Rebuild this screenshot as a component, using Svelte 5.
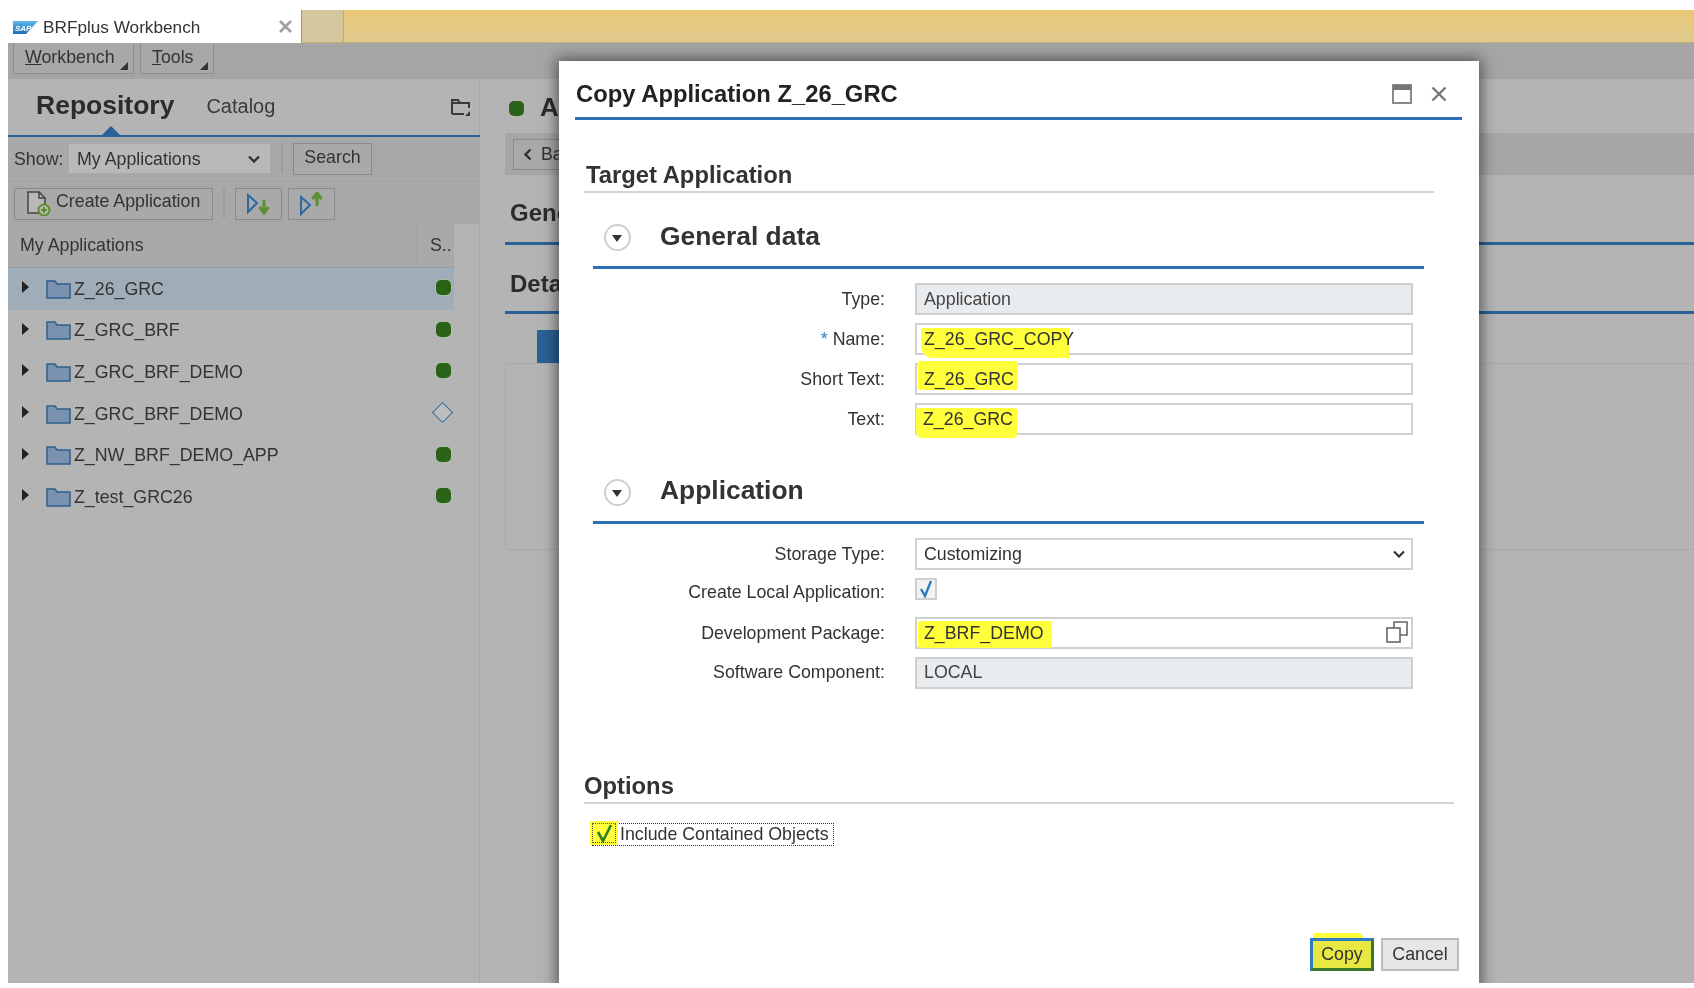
<script>
	const apps = [
		{ name: 'Z_26_GRC', selected: true, status: 'ok' },
		{ name: 'Z_GRC_BRF', status: 'ok' },
		{ name: 'Z_GRC_BRF_DEMO', status: 'ok' },
		{ name: 'Z_GRC_BRF_DEMO', status: 'new' },
		{ name: 'Z_NW_BRF_DEMO_APP', status: 'ok' },
		{ name: 'Z_test_GRC26', status: 'ok' }
	];
</script>

<div class="page">
	<div class="tabstrip">
		<div class="tab">
			<svg class="sap" width="25" height="13" viewBox="0 0 25 13">
				<defs>
					<linearGradient id="sapblue" x1="0" y1="0" x2="0" y2="1">
						<stop offset="0" stop-color="#5cb8ea" />
						<stop offset="1" stop-color="#1c6fb8" />
					</linearGradient>
				</defs>
				<polygon points="0,0 25,0 13,13 0,13" fill="url(#sapblue)" />
				<text x="2" y="9.5" class="saptext">SAP</text>
			</svg>
			<span class="tabtitle">BRFplus Workbench</span>
			<svg class="tabclose" width="13" height="13" viewBox="0 0 13 13" fill="none" stroke="#a0a0a0" stroke-width="2.600"><path d="M1 1l11 11M12 1L1 12" /></svg>
		</div>
		<div class="newtab"></div>
		<div class="tabfill"></div>
	</div>

	<div class="app">
		<div class="menubar">
			<div class="menubtn"><span><u>W</u>orkbench</span><i class="corner"></i></div>
			<div class="menubtn tools"><span><u>T</u>ools</span><i class="corner"></i></div>
		</div>

		<div class="workspace">
			<aside class="left">
				<div class="repohead">
					<div class="repotab">Repository<i class="pointer"></i></div>
					<div class="catalog">Catalog</div>
					<svg class="repoicon" width="21" height="19" viewBox="0 0 21 19" fill="none" stroke="#3a3a3a" stroke-width="2">
						<path d="M2 16V2h6l2 3h9v5M2 16h12" />
						<path d="M2 5h8" />
						<polygon points="20,13 20,18 15,18" fill="#3a3a3a" stroke="none" />
					</svg>
				</div>
				<div class="showbar">
					<span class="showlabel">Show:</span>
					<div class="select">
						My Applications
						<svg width="14" height="9" viewBox="0 0 14 9" fill="none" stroke="#333" stroke-width="2.4"><path d="M2 1.5l5 5 5-5" /></svg>
					</div>
					<i class="sep"></i>
					<div class="btn search">Search</div>
				</div>
				<div class="createbar">
					<div class="btn create">
						<svg width="26" height="26" viewBox="0 0 26 26" fill="none">
							<path d="M3 2h11l6 6v15H3z" stroke="#444" stroke-width="1.5" fill="#b8b8b8" />
							<path d="M14 2v6h6" stroke="#444" stroke-width="1.5" />
							<circle cx="19" cy="20" r="5.5" fill="#b8b8b8" stroke="#5c8f2e" stroke-width="2" />
							<path d="M19 17v6M16 20h6" stroke="#5c8f2e" stroke-width="2" />
						</svg>
						Create Application
					</div>
					<i class="sep"></i>
					<div class="btn iconbtn">
						<svg width="26" height="24" viewBox="0 0 26 24" fill="none">
							<path d="M2 3l9 8-9 9z" stroke="#2a6aa0" stroke-width="2" />
							<path d="M18 8v12M13.500 15l4.500 6 4.500-6" stroke="#5c8f2e" stroke-width="3" />
						</svg>
					</div>
					<div class="btn iconbtn">
						<svg width="26" height="24" viewBox="0 0 26 24" fill="none">
							<path d="M2 5l9 8-9 9z" stroke="#2a6aa0" stroke-width="2" />
							<path d="M18 14V2M13.500 7l4.500-6 4.500 6" stroke="#5c8f2e" stroke-width="3" />
						</svg>
					</div>
				</div>
				<div class="tablehead">
					<div class="colname">My Applications</div>
					<div class="colstatus">S..</div>
				</div>
				{#each apps as app}
					<div class="row" class:selected={app.selected}>
						<i class="arrow"></i>
						<svg width="25" height="19" viewBox="0 0 25 19">
							<path d="M1 18V1h8l2 3h13v14z" fill="#7a92b0" stroke="#2c5f8c" stroke-width="1.5" />
						</svg>
						<span class="appname">{app.name}</span>
						{#if app.status === 'ok'}
							<i class="dot"></i>
						{:else}
							<i class="diamond"></i>
						{/if}
					</div>
				{/each}
			</aside>

			<main class="right">
				<div class="righthead"><i class="dot big"></i><b>A</b></div>
				<div class="strip"><div class="btn back"><svg width="10" height="13" viewBox="0 0 10 13" fill="none" stroke="#333" stroke-width="2.4"><path d="M7.500 1.500l-5 5 5 5" /></svg>Ba</div></div>
				<div class="blockhead gen">Gene</div>
				<div class="blockhead">Deta</div>
				<div class="bluebar"></div>
				<div class="box"></div>
			</main>
		</div>

		<!-- dialog over the dimmed workbench -->
		<div class="modal">
			<header class="modalhead">
				<h1>Copy Application Z_26_GRC</h1>
				<svg width="20" height="20" viewBox="0 0 20 20" fill="none"><rect x="1" y="1" width="18" height="18" stroke="#8a8a8a" stroke-width="2" /><rect x="1" y="1" width="18" height="5" fill="#777" /></svg>
				<svg class="x" width="16" height="16" viewBox="0 0 16 16" fill="none" stroke="#777" stroke-width="2.400"><path d="M1.500 1.500l13 13M14.500 1.500l-13 13" /></svg>
			</header>

			<h2 class="grouptitle target">Target Application</h2>

			<div class="panelhead">
				<span class="collapse"><i></i></span>
				<h3>General data</h3>
			</div>
			<div class="form">
				<label>Type:</label>
				<div class="input readonly">Application</div>
				<label><em>*</em> Name:</label>
				<div class="input"><mark class="m-name">Z_26_GRC_COPY</mark></div>
				<label>Short Text:</label>
				<div class="input"><mark class="m-short">Z_26_GRC</mark></div>
				<label>Text:</label>
				<div class="input"><mark class="m-text">Z_26_GRC</mark></div>
			</div>

			<div class="panelhead second">
				<span class="collapse"><i></i></span>
				<h3>Application</h3>
			</div>
			<div class="form tight">
				<label>Storage Type:</label>
				<div class="input spaced">
					Customizing
					<svg width="12" height="8" viewBox="0 0 12 8" fill="none" stroke="#333" stroke-width="2.200"><path d="M1 1.500l5 5 5-5" /></svg>
				</div>
				<label class="checklabel">Create Local Application:</label>
				<div class="checkcell">
					<span class="checkbox">
						<svg width="16" height="18" viewBox="0 0 16 18" fill="none" stroke="#2a7cc0" stroke-width="2.400"><path d="M3 9l4 7 6-15" /></svg>
					</span>
				</div>
				<label>Development Package:</label>
				<div class="input spaced vhcell">
					<mark class="m-dev">Z_BRF_DEMO</mark>
					<svg class="vh" width="22" height="22" viewBox="0 0 22 22" fill="none" stroke="#666" stroke-width="1.600"><rect x="1" y="7" width="13" height="14" /><path d="M8 7V1h13v13h-7" /></svg>
				</div>
				<label>Software Component:</label>
				<div class="input readonly">LOCAL</div>
			</div>

			<h2 class="grouptitle options">Options</h2>
			<div class="include">
				<span class="includecheck">
					<svg width="20" height="20" viewBox="0 0 20 20" fill="none" stroke="#2e7d1e" stroke-width="2.600"><path d="M4 9l5 9 8-16" /></svg>
				</span>
				<span class="includetext">Include Contained Objects</span>
			</div>

			<footer class="modalfoot">
				<div class="footbtn copy">Copy</div>
				<div class="footbtn">Cancel</div>
			</footer>
		</div>
	</div>
</div>

<style>
	:global(body) {
		margin: 0;
		background: #fff;
	}
	.page {
		height: 988px;
		width: 1694px;
		padding-top: 10px;
		box-sizing: border-box;
		overflow: hidden;
		font-family: 'Liberation Sans', Arial, sans-serif;
		font-size: 17.800px;
		color: #333;
		filter: blur(0.4px);
	}
	i {
		display: block;
		font-style: normal;
	}

	.tabstrip {
		display: flex;
		height: 33px;
		border-bottom: 1px solid #c9ae6e;
		box-sizing: border-box;
	}
	.tab {
		width: 301px;
		background: #fff;
		display: flex;
		align-items: center;
		box-sizing: border-box;
		padding: 2px 9px 0 13px;
		margin-bottom: -1px;
		font-size: 17.200px;
	}
	.tabtitle {
		margin-left: 5px;
		flex: 1;
		color: #333;
	}
	.saptext {
		font: italic bold 8px 'Liberation Sans', sans-serif;
		fill: #fff;
	}
	.tabclose {
		margin-top: -2px;
	}
	.newtab {
		width: 43px;
		background: #d6c69e;
		border-left: 1px solid #a8946a;
		border-right: 1px solid #c5a868;
		box-sizing: border-box;
	}
	.tabfill {
		flex: 1;
		background: linear-gradient(#e9c776, #dfca8f);
	}

	.app {
		position: relative;
		margin-left: 8px;
		height: 940px;
		background: #b4b4b4;
		overflow: hidden;
	}
	.menubar {
		height: 36px;
		background: #a5a5a5;
		display: flex;
		gap: 6px;
		padding-left: 5px;
	}
	.menubtn {
		position: relative;
		width: 121px;
		height: 31px;
		border: 1px solid #8e8e8e;
		border-top: none;
		box-sizing: border-box;
		padding: 4px 0 0 11px;
		background: #a8a8a8;
	}
	.menubtn.tools {
		width: 74px;
	}
	.corner {
		position: absolute;
		right: 5px;
		bottom: 3px;
		width: 0;
		height: 0;
		border-left: 8px solid transparent;
		border-bottom: 8px solid #333;
	}

	.workspace {
		display: flex;
		height: 904px;
	}
	.left {
		width: 472px;
		flex: none;
		border-right: 1px solid #a8a8a8;
		box-sizing: border-box;
	}
	.repohead {
		position: relative;
		height: 58px;
		display: flex;
		align-items: center;
		border-bottom: 2px solid #2a6297;
		box-sizing: border-box;
		padding: 0 9px 4px 28px;
		margin-right: -1px;
	}
	.repotab {
		font-size: 26.500px;
		font-weight: bold;
		color: #2c2c2c;
	}
	.pointer {
		position: absolute;
		left: 94px;
		bottom: 0;
		width: 0;
		height: 0;
		border-left: 9px solid transparent;
		border-right: 9px solid transparent;
		border-bottom: 9px solid #2a6297;
	}
	.catalog {
		font-size: 20px;
		margin: 2px 0 0 32px;
		flex: 1;
		color: #3a3a3a;
	}
	.repoicon {
		margin-top: 4px;
	}
	.showbar,
	.createbar {
		display: flex;
		align-items: center;
		background: #a8a8a8;
	}
	.showbar {
		height: 42px;
		padding: 2px 0 0 6px;
		border-bottom: 1px solid #b0b0b0;
		box-sizing: border-box;
	}
	.createbar {
		height: 45px;
		padding: 4px 0 0 6px;
		box-sizing: border-box;
	}
	.showlabel {
		width: 54px;
		margin-top: 1px;
	}
	.select {
		width: 203px;
		height: 31px;
		background: #b9b9b9;
		border: 1px solid #aaa;
		box-sizing: border-box;
		display: flex;
		align-items: center;
		justify-content: space-between;
		padding: 1px 9px 0 8px;
	}
	.sep {
		width: 2px;
		height: 31px;
		background: #9c9c9c;
		margin: 0 10px;
	}
	.btn {
		border: 1px solid #8a8a8a;
		box-sizing: border-box;
		height: 32px;
		display: flex;
		align-items: center;
		background: #a9a9a9;
	}
	.search {
		width: 79px;
		justify-content: center;
		padding-bottom: 2px;
	}
	.create {
		width: 199px;
		gap: 5px;
		padding: 0 0 4px 10px;
	}
	.create svg {
		margin-bottom: -3px;
	}
	.iconbtn {
		width: 47px;
		justify-content: center;
		margin-right: 6px;
	}
	.tablehead {
		height: 44px;
		width: 446px;
		display: flex;
		background: #a9a9a9;
		border-bottom: 1px solid #9c9c9c;
		box-sizing: border-box;
	}
	.colname {
		width: 410px;
		padding-left: 12px;
		box-sizing: border-box;
		line-height: 43px;
		border-right: 1px solid #9c9c9c;
	}
	.colstatus {
		padding-left: 12px;
		line-height: 43px;
	}
	.row {
		width: 446px;
		height: 41.600px;
		display: flex;
		align-items: center;
		box-sizing: border-box;
		padding: 1px 0 0 14px;
		position: relative;
	}
	.row.selected {
		background: #9fadb8;
	}
	.arrow {
		width: 0;
		height: 0;
		border-top: 6px solid transparent;
		border-bottom: 6px solid transparent;
		border-left: 7px solid #222;
		margin-right: 17px;
		margin-top: -4px;
	}
	.appname {
		margin-left: 3px;
		flex: 1;
	}
	.dot {
		width: 15px;
		height: 15px;
		border-radius: 5px;
		background: #2a6318;
		margin-right: 3px;
		box-shadow: 0 0 0 1px #a9c09f;
	}
	.row .dot,
	.row .diamond {
		margin-top: -3px;
	}
	.diamond {
		width: 15px;
		height: 15px;
		margin-right: 4px;
		transform: rotate(45deg);
		border: 1.500px solid #2a6aa0;
		box-sizing: border-box;
		background: #bdbdbd;
	}

	.right {
		flex: 1;
		padding-left: 25px;
		min-width: 0;
	}
	.righthead {
		height: 54px;
		display: flex;
		align-items: center;
		font-size: 26px;
		padding: 4px 0 0 4px;
		box-sizing: border-box;
	}
	.righthead b {
		margin: -1px 0 0 16px;
		color: #2c2c2c;
	}
	.dot.big {
		margin-right: 0;
		box-shadow: none;
	}
	.strip {
		height: 42px;
		background: #a6a6a6;
		display: flex;
		align-items: center;
		padding-left: 8px;
	}
	.back {
		width: 90px;
		height: 31px;
		gap: 8px;
		padding-left: 9px;
	}
	.blockhead {
		height: 69px;
		box-sizing: border-box;
		border-bottom: 3px solid #2a6297;
		display: flex;
		align-items: flex-end;
		padding-bottom: 13px;
		font-size: 24px;
		font-weight: bold;
		color: #2c2c2c;
		line-height: 28px;
		padding-left: 5px;
	}
	.gen {
		height: 70px;
		padding-bottom: 15px;
	}
	.bluebar {
		width: 60px;
		height: 34px;
		margin: 16px 0 0 32px;
		background: #2a6297;
	}
	.box {
		height: 187px;
		margin-top: -1px;
		border: 1px solid #a9a9a9;
		box-sizing: border-box;
	}

	.modal {
		position: absolute;
		left: 551px;
		top: 18px;
		width: 920px;
		height: 930px;
		background: #fff;
		box-shadow: 0 0 14px 2px rgba(0, 0, 0, 0.55);
		display: flex;
		flex-direction: column;
		box-sizing: border-box;
	}
	.modalhead {
		height: 59px;
		margin: 0 17px 0 16px;
		display: flex;
		align-items: center;
		border-bottom: 3px solid #2c71b8;
		box-sizing: border-box;
		padding: 8px 0 0 1px;
		flex: none;
	}
	.modalhead h1 {
		flex: 1;
		margin: 2px 0 0 0;
		font-size: 23.800px;
		color: #222;
	}
	.modalhead svg {
		margin-top: 2px;
	}
	.modalhead .x {
		margin: 2px 15px 0 19px;
	}
	.grouptitle {
		margin: 0 0 0 25px;
		box-sizing: border-box;
		font-size: 23.800px;
		line-height: 30px;
		color: #333;
		border-bottom: 2px solid #d4d4d4;
		display: flex;
		align-items: flex-end;
		flex: none;
	}
	.grouptitle.target {
		width: 850px;
		height: 73px;
		padding: 0 0 1px 2px;
	}
	.grouptitle.options {
		width: 870px;
		height: 44px;
		margin-top: 71px;
		padding-bottom: 1px;
	}
	.panelhead {
		height: 76px;
		margin-left: 34px;
		width: 831px;
		padding: 13px 0 0 10.500px;
		border-bottom: 3px solid #2c71b8;
		box-sizing: border-box;
		display: flex;
		align-items: center;
		flex: none;
	}
	.panelhead.second {
		margin-top: 13px;
	}
	.panelhead.second h3 {
		margin-top: -2px;
	}
	.panelhead h3 {
		margin: 0 0 0 29.500px;
		font-size: 26.400px;
		color: #333;
	}
	.collapse {
		width: 27px;
		height: 27px;
		border: 2.500px solid #cfcfcf;
		border-radius: 50%;
		box-sizing: border-box;
		display: flex;
		align-items: center;
		justify-content: center;
		margin-top: 2px;
	}
	.collapse i {
		width: 0;
		height: 0;
		border-left: 5px solid transparent;
		border-right: 5px solid transparent;
		border-top: 7px solid #333;
		margin-top: 2px;
	}
	.form {
		margin: 14px 0 0 34px;
		display: grid;
		grid-template-columns: 292px 498px;
		column-gap: 30px;
		row-gap: 8px;
		grid-auto-rows: 32px;
		flex: none;
	}
	.form.tight {
		row-gap: 7.500px;
	}
	label {
		text-align: right;
		align-self: center;
		color: #333;
	}
	label em {
		color: #2c7cc4;
		font-style: normal;
	}
	.checklabel {
		margin-top: -3px;
	}
	.input {
		border: 2px solid #d0d0d0;
		box-sizing: border-box;
		display: flex;
		align-items: center;
		padding: 0 7px;
		color: #333;
		background: #fff;
	}
	.input.readonly {
		background: #e9ecef;
		color: #444;
	}
	.input.spaced {
		justify-content: space-between;
		padding-right: 6px;
	}
	.input.vhcell {
		padding-right: 3px;
	}
	.vh {
		margin: -2px 0 0 0;
	}
	.checkcell {
		display: flex;
		align-items: flex-start;
	}
	.checkbox {
		width: 22px;
		height: 22px;
		border: 2px solid #cfcfcf;
		box-sizing: border-box;
		display: flex;
		align-items: center;
		justify-content: center;
		background: #f2f2f2;
	}
	mark {
		background: #ffff3c;
		color: #333;
		display: inline-block;
		line-height: 22px;
	}
	/* marker strokes spill over the input borders */
	.m-name {
		padding: 0 0 8px 3px;
		margin: 0 0 -8px -3px;
		background: linear-gradient(#ffff3c, #ffff3c) no-repeat;
		background-size: calc(100% - 5px) 100%;
		border-radius: 2px 2px 4px 12px;
	}
	.m-short {
		padding: 7px 4px 0 6px;
		margin: -7px 0 0 -6px;
		border-radius: 2px;
	}
	.m-text {
		padding: 0 4px 8px 7px;
		margin: 0 0 -8px -8px;
		border-radius: 2px 2px 4px 6px;
	}
	.m-dev {
		padding: 1px 8px 4px 6px;
		margin: 0 0 -3px -6px;
		border-radius: 2px;
	}
	.include {
		margin: 19px 0 0 33px;
		width: 242px;
		height: 23px;
		border: 1px dotted #333;
		box-sizing: border-box;
		display: flex;
		align-items: center;
		flex: none;
	}
	.includecheck {
		width: 28px;
		height: 24px;
		margin: -3px 0 0 -3px;
		background: #ffff3c;
		display: flex;
		align-items: center;
		justify-content: center;
		flex: none;
		outline: 1px dotted #555;
		outline-offset: -3px;
	}
	.includetext {
		margin-left: 2px;
	}
	.modalfoot {
		margin-top: auto;
		padding: 0 20px 20px 0;
		display: flex;
		justify-content: flex-end;
		gap: 7px;
		align-items: flex-end;
	}
	.footbtn {
		width: 78px;
		height: 33px;
		border: 2px solid #bdbdbd;
		background: #e6e6e6;
		box-sizing: border-box;
		display: flex;
		align-items: center;
		justify-content: center;
		color: #333;
	}
	.footbtn.copy {
		position: relative;
		width: 64px;
		background: #e8e843;
		border: 3px solid;
		border-color: #2f7cc4 #3a7a2a #3a7a2a #2f7cc4;
	}
	.footbtn.copy::before {
		content: '';
		position: absolute;
		left: 0;
		top: -8px;
		width: 50px;
		height: 5px;
		background: #ffff3c;
		border-radius: 2px 6px 0 0;
	}
</style>
